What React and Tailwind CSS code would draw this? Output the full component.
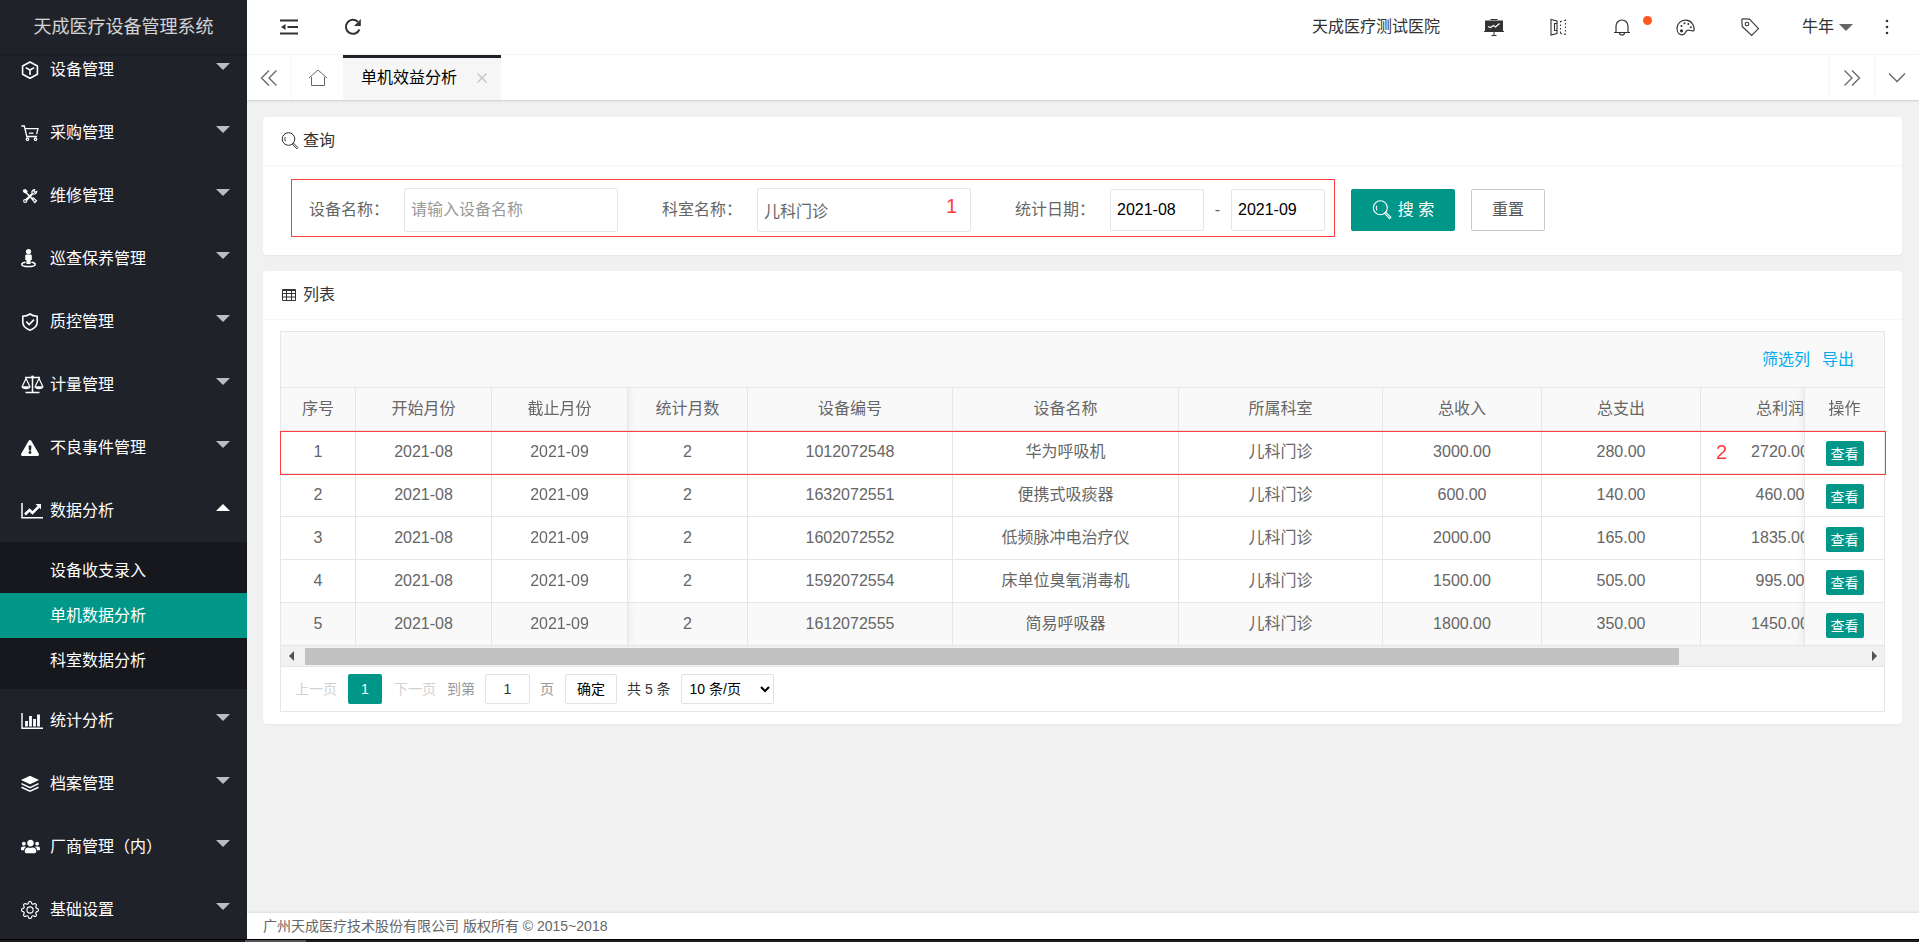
import { useState } from 'react';
import { FaExclamationTriangle, FaUsers } from 'react-icons/fa';
import { BsGear } from 'react-icons/bs';

const columns = [
    { key: 'index', title: '序号', width: 'w-[75px]', fixed: 'sticky left-0 z-10' },
    { key: 'start', title: '开始月份', width: 'w-[136px]', fixed: 'sticky left-[75px] z-10' },
    { key: 'end', title: '截止月份', width: 'w-[136px]', fixed: 'sticky left-[211px] z-10 shadow-[1px_0_8px_rgba(0,0,0,0.08)] [clip-path:inset(0_-12px_0_0)]' },
    { key: 'months', title: '统计月数', width: 'w-[120px]', fixed: '' },
    { key: 'code', title: '设备编号', width: 'w-[205px]', fixed: '' },
    { key: 'name', title: '设备名称', width: 'w-[226px]', fixed: '' },
    { key: 'dept', title: '所属科室', width: 'w-[204px]', fixed: '' },
    { key: 'income', title: '总收入', width: 'w-[159px]', fixed: '' },
    { key: 'cost', title: '总支出', width: 'w-[159px]', fixed: '' },
    { key: 'profit', title: '总利润', width: 'w-[159px]', fixed: '' }
];

const rows = [
    { index: 1, start: '2021-08', end: '2021-09', months: 2, code: '1012072548', name: '华为呼吸机', dept: '儿科门诊', income: '3000.00', cost: '280.00', profit: '2720.00' },
    { index: 2, start: '2021-08', end: '2021-09', months: 2, code: '1632072551', name: '便携式吸痰器', dept: '儿科门诊', income: '600.00', cost: '140.00', profit: '460.00' },
    { index: 3, start: '2021-08', end: '2021-09', months: 2, code: '1602072552', name: '低频脉冲电治疗仪', dept: '儿科门诊', income: '2000.00', cost: '165.00', profit: '1835.00' },
    { index: 4, start: '2021-08', end: '2021-09', months: 2, code: '1592072554', name: '床单位臭氧消毒机', dept: '儿科门诊', income: '1500.00', cost: '505.00', profit: '995.00' },
    { index: 5, start: '2021-08', end: '2021-09', months: 2, code: '1612072555', name: '简易呼吸器', dept: '儿科门诊', income: '1800.00', cost: '350.00', profit: '1450.00' }
];

function Svg({ size = 18, box = 18, width = 1.3, children }) {
    return (
        <svg width={size} height={size} viewBox={`0 0 ${box} ${box}`} fill="none" stroke="currentColor" strokeWidth={width} aria-hidden="true">
            {children}
        </svg>
    );
}

function CubeIcon() {
    return (
        <Svg width={1.6}>
            <path d="M9 1 16.4 5v8.2L9 17.2 1.6 13.2V5z" strokeLinejoin="round" />
            <path d="M4.8 6.6 9 9l4.2-2.4M9 9v5" />
        </Svg>
    );
}

function CartIcon() {
    return (
        <Svg width={1.3}>
            <path d="M.3 2h3l2.500 10.500h10.200M4 4.600h13l-1.400 5.600" />
            <path d="M8 9.200h4.500" />
            <circle cx="6.500" cy="15.200" r="1.200" />
            <circle cx="14.500" cy="15.200" r="1.200" />
        </Svg>
    );
}

function ToolsIcon() {
    return (
        <Svg width={1.2}>
            <path d="m5.500 6 6.800 7" strokeWidth="1.600" />
            <path d="M11.200 7 4.600 13.600" strokeWidth="2.400" />
            <path d="m2.500 3.200 2-.6 1.600 2.200-1.300 1.300-2-1.300z" fill="currentColor" />
            <path d="M13.500 2.700c-2 .2-3 1.600-2.500 3.400L12.300 7c1.800.4 3.200-.6 3.400-2.500l-2 .8-.8-.8z" />
            <path d="m11 11.800 1.300-1.100 3.200 3-1.700 1.900z" />
            <circle cx="4.200" cy="14" r="1.500" />
        </Svg>
    );
}

function PersonIcon() {
    return (
        <svg width="15" height="19" viewBox="0 0 15 19" fill="currentColor" aria-hidden="true">
            <circle cx="7.500" cy="2.600" r="2.600" />
            <path d="M5.500 5.400h4c.8 0 1.300.6 1.300 1.300v4.200H9.600V15H5.400v-4.100H4.200V6.700c0-.7.500-1.300 1.300-1.300z" />
            <path d="M4.600 13.300C2.200 13.600.8 14.300.8 15.200c0 1.400 3 2.400 6.700 2.400s6.700-1 6.700-2.400c0-.9-1.400-1.600-3.800-1.900" fill="none" stroke="currentColor" strokeWidth="1.500" />
        </svg>
    );
}

function ShieldIcon() {
    return (
        <Svg width={1.6}>
            <path d="M9 1c2 1.500 4.600 2.200 7.200 2.300v6c0 3.700-3 6.400-7.200 7.900C4.800 15.700 1.800 13 1.800 9.300v-6C4.400 3.200 7 2.500 9 1z" />
            <path d="m5.300 8.600 2.900 3 4.800-5" />
        </Svg>
    );
}

function ScaleIcon() {
    return (
        <svg width="23" height="19" viewBox="0 0 23 19" fill="none" stroke="currentColor" strokeWidth="1.2" aria-hidden="true">
            <path d="M4 2.500h15M11.500 2.500v15M4.500 17.500h14" strokeWidth="1.500" />
            <circle cx="11.500" cy="2" r="1.400" fill="currentColor" stroke="none" />
            <path d="M1.200 11.500 5 3.500l3.800 8M14.200 11.500l3.800-8 3.800 8" />
            <path d="M.3 11.200h9.400c-.3 2-2.200 3-4.700 3s-4.400-1-4.700-3zM13.300 11.200h9.400c-.3 2-2.200 3-4.700 3s-4.400-1-4.700-3z" fill="currentColor" stroke="none" />
        </svg>
    );
}

function LineChartIcon() {
    return (
        <svg width="22" height="18" viewBox="0 0 22 18" fill="none" stroke="currentColor" aria-hidden="true">
            <path d="M1 1v14.800h21" strokeWidth="1.5" />
            <path d="m4 12.500 4.500-4.500 3 3 6-6.200" strokeWidth="2.6" />
            <path d="M14.500 2h5.500v5.500z" fill="currentColor" stroke="none" />
        </svg>
    );
}

function BarChartIcon() {
    return (
        <svg width="22" height="18" viewBox="0 0 22 18" fill="none" stroke="currentColor" aria-hidden="true">
            <path d="M1 1v15.300h21" strokeWidth="1.4" />
            <path d="M5.500 14.500V9M9.500 14.500V4M13.500 14.500V7M17.500 14.500V2.500" strokeWidth="2.8" />
        </svg>
    );
}

function LayersIcon() {
    return (
        <Svg width={1.5}>
            <path d="M9 .8 18 5 9 9.200 0 5z" fill="currentColor" stroke="none" />
            <path d="m.5 8.600 8.500 4 8.500-4M.5 12.200l8.500 4 8.500-4" />
        </Svg>
    );
}

function SearchIcon({ size = 18 }) {
    return (
        <Svg size={size} width={1}>
            <circle cx="7.500" cy="7" r="6.300" />
            <path d="M4.500 9.300a4 4 0 0 1-.2-4.200" />
            <path d="m12.300 11 4.700 4.600-1.200 1.200-4.500-4.800z" />
        </Svg>
    );
}

const menus = [
    { title: '设备管理', icon: <CubeIcon /> },
    { title: '采购管理', icon: <CartIcon /> },
    { title: '维修管理', icon: <ToolsIcon /> },
    { title: '巡查保养管理', icon: <PersonIcon /> },
    { title: '质控管理', icon: <ShieldIcon /> },
    { title: '计量管理', icon: <ScaleIcon /> },
    { title: '不良事件管理', icon: <FaExclamationTriangle size={18} /> },
    { title: '数据分析', icon: <LineChartIcon />, children: ['设备收支录入', '单机数据分析', '科室数据分析'] },
    { title: '统计分析', icon: <BarChartIcon /> },
    { title: '档案管理', icon: <LayersIcon /> },
    { title: '厂商管理（内）', icon: <FaUsers size={19} /> },
    { title: '基础设置', icon: <BsGear size={18} /> }
];

function Sidebar() {
    return (
        <aside className="flex w-[247px] shrink-0 flex-col overflow-hidden bg-[#20222A] text-white">
            <div className="z-10 flex h-[54px] shrink-0 items-center justify-center bg-[#20222A] text-lg whitespace-nowrap text-white/80 shadow-[0_1px_2px_rgba(0,0,0,0.25)]">
                天成医疗设备管理系统
            </div>
            <nav className="-mt-4">
                {menus.map(menu => (
                    <div key={menu.title}>
                        <a href="#" className="flex h-[63px] items-center pr-[17px] pl-[21px]">
                            <span className="flex w-[29px] shrink-0 items-center">{menu.icon}</span>
                            <span className="grow">{menu.title}</span>
                            {menu.children ? (
                                <svg className="mb-1.5" width="14" height="7" viewBox="0 0 14 7" fill="#fff" aria-hidden="true"><path d="M0 7 7 0l7 7z" /></svg>
                            ) : (
                                <svg className="mb-1.5" width="14" height="7" viewBox="0 0 14 7" fill="#bcbdbf" aria-hidden="true"><path d="M0 0h14L7 7z" /></svg>
                            )}
                        </a>
                        {menu.children && (
                            <div className="bg-[#17181d] py-1.5">
                                {menu.children.map(item => (
                                    <a key={item} href="#" className={item === '单机数据分析' ? 'flex h-[45px] items-center bg-[#009688] pl-[50px]' : 'flex h-[45px] items-center pl-[50px]'}>
                                        {item}
                                    </a>
                                ))}
                            </div>
                        )}
                    </div>
                ))}
            </nav>
        </aside>
    );
}

function Header() {
    return (
        <header className="flex h-[55px] shrink-0 items-center justify-between border-b border-[#f6f6f6] bg-white text-[#333]">
            <div className="flex items-center">
                <button className="flex w-[84px] justify-center" aria-label="侧边伸缩">
                    <Svg width={1.8}>
                        <path d="M0 2.500h18M7.500 9H18M0 15.500h18" />
                        <path d="M1 9l4.500-3v6z" fill="currentColor" stroke="none" />
                    </Svg>
                </button>
                <button className="flex w-11 justify-center" aria-label="刷新">
                    <Svg width={2}>
                        <path d="M15.400 11.500A7 7 0 1 1 13.800 3.800" />
                        <path d="M16.800 1v7H10z" fill="currentColor" stroke="none" />
                    </Svg>
                </button>
            </div>
            <div className="flex items-center">
                <a href="#" className="px-[22px]">天成医疗测试医院</a>
                <a href="#" className="flex w-16 justify-center" aria-label="大屏">
                    <Svg size={20} box={20} width={1}>
                        <path d="M1 3.500h18v11H1z" fill="currentColor" stroke="none" />
                        <path d="M0 14.500h20M6.500 2.500h7M10 15v3M7.500 18.500h5" />
                        <path d="m4 9.500 2.500 1L9.500 8.500l2 1.500L15.500 6.500" stroke="#fff" strokeWidth="1.200" />
                    </Svg>
                </a>
                <a href="#" className="flex w-16 justify-center" aria-label="手册">
                    <Svg width={1.1}>
                        <path d="M2 1.500l6 1.500v12.500L2 17zM8 5.500H5.500v7H8" />
                        <path d="M11.500 3v13M16.500 1.500v15M11.500 3.500l5-1.500M11.500 15.500l5 1" strokeDasharray="1.500 2" />
                    </Svg>
                </a>
                <a href="#" className="relative flex w-16 justify-center" aria-label="消息">
                    <Svg width={1.2}>
                        <path d="M1 14.500h16M3 14.500V8a6 6 0 0 1 12 0v6.500M6.500 14.800a2.500 2.200 0 0 0 5 0" />
                    </Svg>
                    <span className="absolute -top-0.5 right-0.5 h-[9px] w-[9px] rounded-full bg-[#FF5722]" />
                </a>
                <a href="#" className="flex w-16 justify-center" aria-label="主题">
                    <Svg size={19} box={19} width={1.2}>
                        <path d="M18 12.500c.8-5.500-3-10.300-8.500-10.300C4.500 2.200 1 6 1 10.300c0 4 2.300 6.500 5 6.500 3.500 0 3-3 5-4.300 2.500-1.600 4.500 1.800 7 0z" />
                        <g fill="currentColor" stroke="none">
                            <circle cx="5.500" cy="12.800" r="1.600" />
                            <circle cx="5.500" cy="8" r="1" />
                            <circle cx="8.500" cy="5.300" r="1" />
                            <circle cx="12.300" cy="6" r="1" />
                            <circle cx="14.800" cy="9.300" r="1" />
                        </g>
                    </Svg>
                </a>
                <a href="#" className="flex w-16 justify-center" aria-label="便签">
                    <Svg width={1.1}>
                        <path d="M.8 1.500 2 .8l6.500.3 9 9.500-6.800 6.800L1.200 8.500z" strokeLinejoin="round" />
                        <circle cx="6" cy="6" r="1.800" />
                    </Svg>
                </a>
                <a href="#" className="mr-0.5 flex items-center gap-[5px] pl-5">
                    牛年
                    <svg width="14" height="7" viewBox="0 0 14 7" fill="#666" aria-hidden="true"><path d="M0 0h14L7 7z" /></svg>
                </a>
                <a href="#" className="flex w-16 justify-center" aria-label="更多">
                    <svg width="4" height="18" viewBox="0 0 4 18" fill="currentColor" aria-hidden="true">
                        <circle cx="2" cy="3" r="1.3" />
                        <circle cx="2" cy="9" r="1.3" />
                        <circle cx="2" cy="15" r="1.3" />
                    </svg>
                </a>
            </div>
        </header>
    );
}

function TabsBar() {
    return (
        <div className="z-10 flex h-[45px] shrink-0 bg-white text-[#666] shadow-[0_1px_2px_rgba(0,0,0,0.15)]">
            <button className="flex w-[45px] items-center justify-center border-r border-[#f6f6f6]" aria-label="向左">
                <Svg><path d="M9 1.500 1.500 9 9 16.500M16.500 1.500 9 9l7.500 7.500" /></Svg>
            </button>
            <a href="#" className="flex w-[51px] items-center justify-center" aria-label="主页">
                <Svg width={1}><path d="M0 9 9 1l9 8M2.500 8v8.500h13V8" /></Svg>
            </a>
            <div className="flex items-center border-t-[3px] border-[#20222A] bg-[#f6f6f6] pr-3.5 pb-[3px] pl-[18px]">
                <a href="#" className="text-black">单机效益分析</a>
                <button className="ml-5 text-[#c2c2c2]" aria-label="关闭">
                    <Svg size={10} box={10} width={1.2}><path d="m.500.500 9 9M9.500.500l-9 9" /></Svg>
                </button>
            </div>
            <div className="grow" />
            <button className="flex w-[45px] items-center justify-center border-l border-[#f6f6f6]" aria-label="向右">
                <Svg><path d="M1.500 1.500 9 9l-7.500 7.500M9 1.500 16.500 9 9 16.500" /></Svg>
            </button>
            <button className="flex w-[45px] items-center justify-center border-l border-[#f6f6f6]" aria-label="展开">
                <Svg><path d="m1 4.500 8 8 8-8" /></Svg>
            </button>
        </div>
    );
}

function SearchCard() {
    const [name, setName] = useState('');
    const [dept, setDept] = useState('儿科门诊');
    const [start, setStart] = useState('2021-08');
    const [end, setEnd] = useState('2021-09');

    return (
        <section className="rounded-sm bg-white shadow-[0_1px_2px_rgba(0,0,0,0.05)]">
            <h2 className="flex h-[49px] items-center gap-1 border-b border-[#f6f6f6] px-[18px] text-[#333]">
                <SearchIcon />
                查询
            </h2>
            <form className="flex items-center gap-4 pt-[13px] pb-[18px] pl-7" onSubmit={e => e.preventDefault()}>
                <div className="flex items-center gap-11 border border-[#ff3b3b] pt-2 pr-[9px] pb-1 pl-[17px]">
                    <div className="flex items-center gap-[15px]">
                        <label htmlFor="name" className="w-20 whitespace-nowrap">设备名称：</label>
                        <input id="name" value={name} onChange={e => setName(e.target.value)} placeholder="请输入设备名称" className="h-11 w-[214px] rounded-xs border border-[#e6e6e6] px-1.5 placeholder:text-[#999]" />
                    </div>
                    <div className="relative flex items-center gap-[15px]">
                        <label htmlFor="dept" className="w-20 whitespace-nowrap">科室名称：</label>
                        <input id="dept" value={dept} onChange={e => setDept(e.target.value)} className="h-11 w-[214px] rounded-xs border border-[#e6e6e6] px-1.5" />
                        <span className="absolute top-1 right-3.5 text-xl text-[#ff3b3b]">1</span>
                    </div>
                    <div className="flex items-center gap-[15px]">
                        <label htmlFor="start" className="w-20 whitespace-nowrap">统计日期：</label>
                        <div className="flex items-center">
                            <input id="start" value={start} onChange={e => setStart(e.target.value)} className="h-[42px] w-[94px] rounded-xs border border-[#e6e6e6] px-1.5 text-black" />
                            <span className="w-[27px] text-center">-</span>
                            <input aria-label="截止月份" value={end} onChange={e => setEnd(e.target.value)} className="h-[42px] w-[94px] rounded-xs border border-[#e6e6e6] px-1.5 text-black" />
                        </div>
                    </div>
                </div>
                <div className="flex items-center gap-4 pt-1">
                    <button type="submit" className="flex h-[42px] w-[104px] items-center justify-center gap-1.5 rounded-xs bg-[#009688] whitespace-nowrap text-white">
                        <SearchIcon size={20} />
                        搜 索
                    </button>
                    <button type="reset" className="h-[42px] w-[74px] rounded-xs border border-[#c9c9c9] text-[#555]">重置</button>
                </div>
            </form>
        </section>
    );
}

function ResultTable() {
    const cell = 'h-[43px] border-r border-b border-[#e6e6e6] text-center font-normal whitespace-nowrap';
    const action = 'sticky right-0 z-10 w-20 border-b border-l border-[#e6e6e6] text-center font-normal shadow-[-1px_0_8px_rgba(0,0,0,0.08)] [clip-path:inset(0_0_0_-12px)]';

    return (
        <div className="relative">
            <div className="overflow-hidden">
                <table className="w-full min-w-[1659px] table-fixed border-separate border-spacing-0">
                    <thead>
                        <tr className="bg-[#f9f9f9]">
                            {columns.map(col => (
                                <th key={col.key} className={`${cell} ${col.width} ${col.fixed} bg-[#f9f9f9]`}>{col.title}</th>
                            ))}
                            <th className={`${action} bg-[#f9f9f9]`}>操作</th>
                        </tr>
                    </thead>
                    <tbody>
                        {rows.map(row => {
                            const bg = row.index === 5 ? 'bg-[#f9f9f9]' : 'bg-white';
                            return (
                                <tr key={row.index}>
                                    {columns.map(col => (
                                        <td key={col.key} className={`${cell} ${col.fixed} ${bg}`}>{row[col.key]}</td>
                                    ))}
                                    <td className={`${action} ${bg}`}>
                                        <button className="mx-auto mt-[3px] block h-[25px] w-[38px] rounded-xs bg-[#009688] text-sm leading-6 text-white">查看</button>
                                    </td>
                                </tr>
                            );
                        })}
                    </tbody>
                </table>
            </div>
            <div className="pointer-events-none absolute top-[43px] -right-0.5 -left-px z-20 h-11 border border-[#ff3b3b]">
                <span className="absolute top-1.5 right-[158px] text-xl text-[#ff3b3b]">2</span>
            </div>
        </div>
    );
}

function Pagination() {
    return (
        <div className="flex h-11 items-center pl-3.5 text-sm text-[#999]">
            <a href="#" className="text-[#d2d2d2]">上一页</a>
            <span className="ml-[11px] flex h-[30px] w-[34px] items-center justify-center rounded-xs bg-[#009688] text-white">1</span>
            <a href="#" className="ml-3 text-[#d2d2d2]">下一页</a>
            <label htmlFor="page" className="ml-[11px]">到第</label>
            <input id="page" defaultValue="1" className="mx-2.5 h-[30px] w-[45px] rounded-xs border border-[#e2e2e2] text-center text-[#333]" />
            <span>页</span>
            <button className="ml-[11px] h-[30px] w-[52px] rounded-xs border border-[#e2e2e2] text-black">确定</button>
            <span className="mx-2.5 text-[#333]">共 5 条</span>
            <select aria-label="每页条数" className="h-[30px] w-[93px] rounded-xs border border-[#e2e2e2] bg-white pl-1 text-black">
                <option>10 条/页</option>
                <option>20 条/页</option>
            </select>
        </div>
    );
}

function ListCard() {
    return (
        <section className="rounded-sm bg-white shadow-[0_1px_2px_rgba(0,0,0,0.05)]">
            <h2 className="flex h-[49px] items-center gap-1.5 border-b border-[#f6f6f6] px-[18px] text-[#333]">
                <Svg size={16} box={16} width={1}>
                    <path d="M1.500 2.500h13v11h-13zM1.500 3.500h13M1.500 6.500h13M1.500 10h13M5.500 2.500v11M10.500 2.500v11" />
                </Svg>
                列表
            </h2>
            <div className="px-[17px] pt-[11px] pb-3">
                <div className="border border-[#e6e6e6]">
                    <div className="flex h-14 items-center justify-end gap-3 border-b border-[#e6e6e6] bg-[#f9f9f9] pr-[30px] text-[#01AAED]">
                        <a href="#">筛选列</a>
                        <a href="#">导出</a>
                    </div>
                    <ResultTable />
                    <div className="flex h-[21px] items-center border-b border-[#e6e6e6] bg-[#f1f1f1]">
                        <svg className="mx-[7px] shrink-0" width="10" height="10" viewBox="0 0 10 10" fill="#505050" aria-hidden="true"><path d="M6 0v10L1 5z" /></svg>
                        <div className="h-[17px] w-6/7 bg-[#c1c1c1]" />
                        <div className="grow" />
                        <svg className="mx-[5px] shrink-0" width="10" height="10" viewBox="0 0 10 10" fill="#505050" aria-hidden="true"><path d="M3 0v10l5-5z" /></svg>
                    </div>
                    <Pagination />
                </div>
            </div>
        </section>
    );
}

function App() {
    return (
        <div className="flex h-screen flex-col overflow-hidden bg-[#f1f1f1] font-['Liberation_Sans','Noto_Sans_CJK_SC',sans-serif] text-base text-[#666]">
            <div className="flex min-h-0 grow">
                <Sidebar />
                <div className="flex min-w-0 grow flex-col">
                    <Header />
                    <TabsBar />
                    <main className="flex min-h-0 grow flex-col gap-4 overflow-hidden pt-[17px] pr-[17px] pl-4">
                        <SearchCard />
                        <ListCard />
                    </main>
                    <footer className="flex h-[26px] shrink-0 items-center bg-white px-4 text-sm shadow-[0_-1px_2px_rgba(0,0,0,0.08)]">
                        广州天成医疗技术股份有限公司 版权所有 © 2015~2018
                    </footer>
                </div>
            </div>
            <div className="h-[3px] shrink-0 border-t border-black bg-[#1c1c20]">
                <div className="ml-[245px] h-0.5 w-[61px] bg-[#555]" />
            </div>
        </div>
    );
}

export default App;
